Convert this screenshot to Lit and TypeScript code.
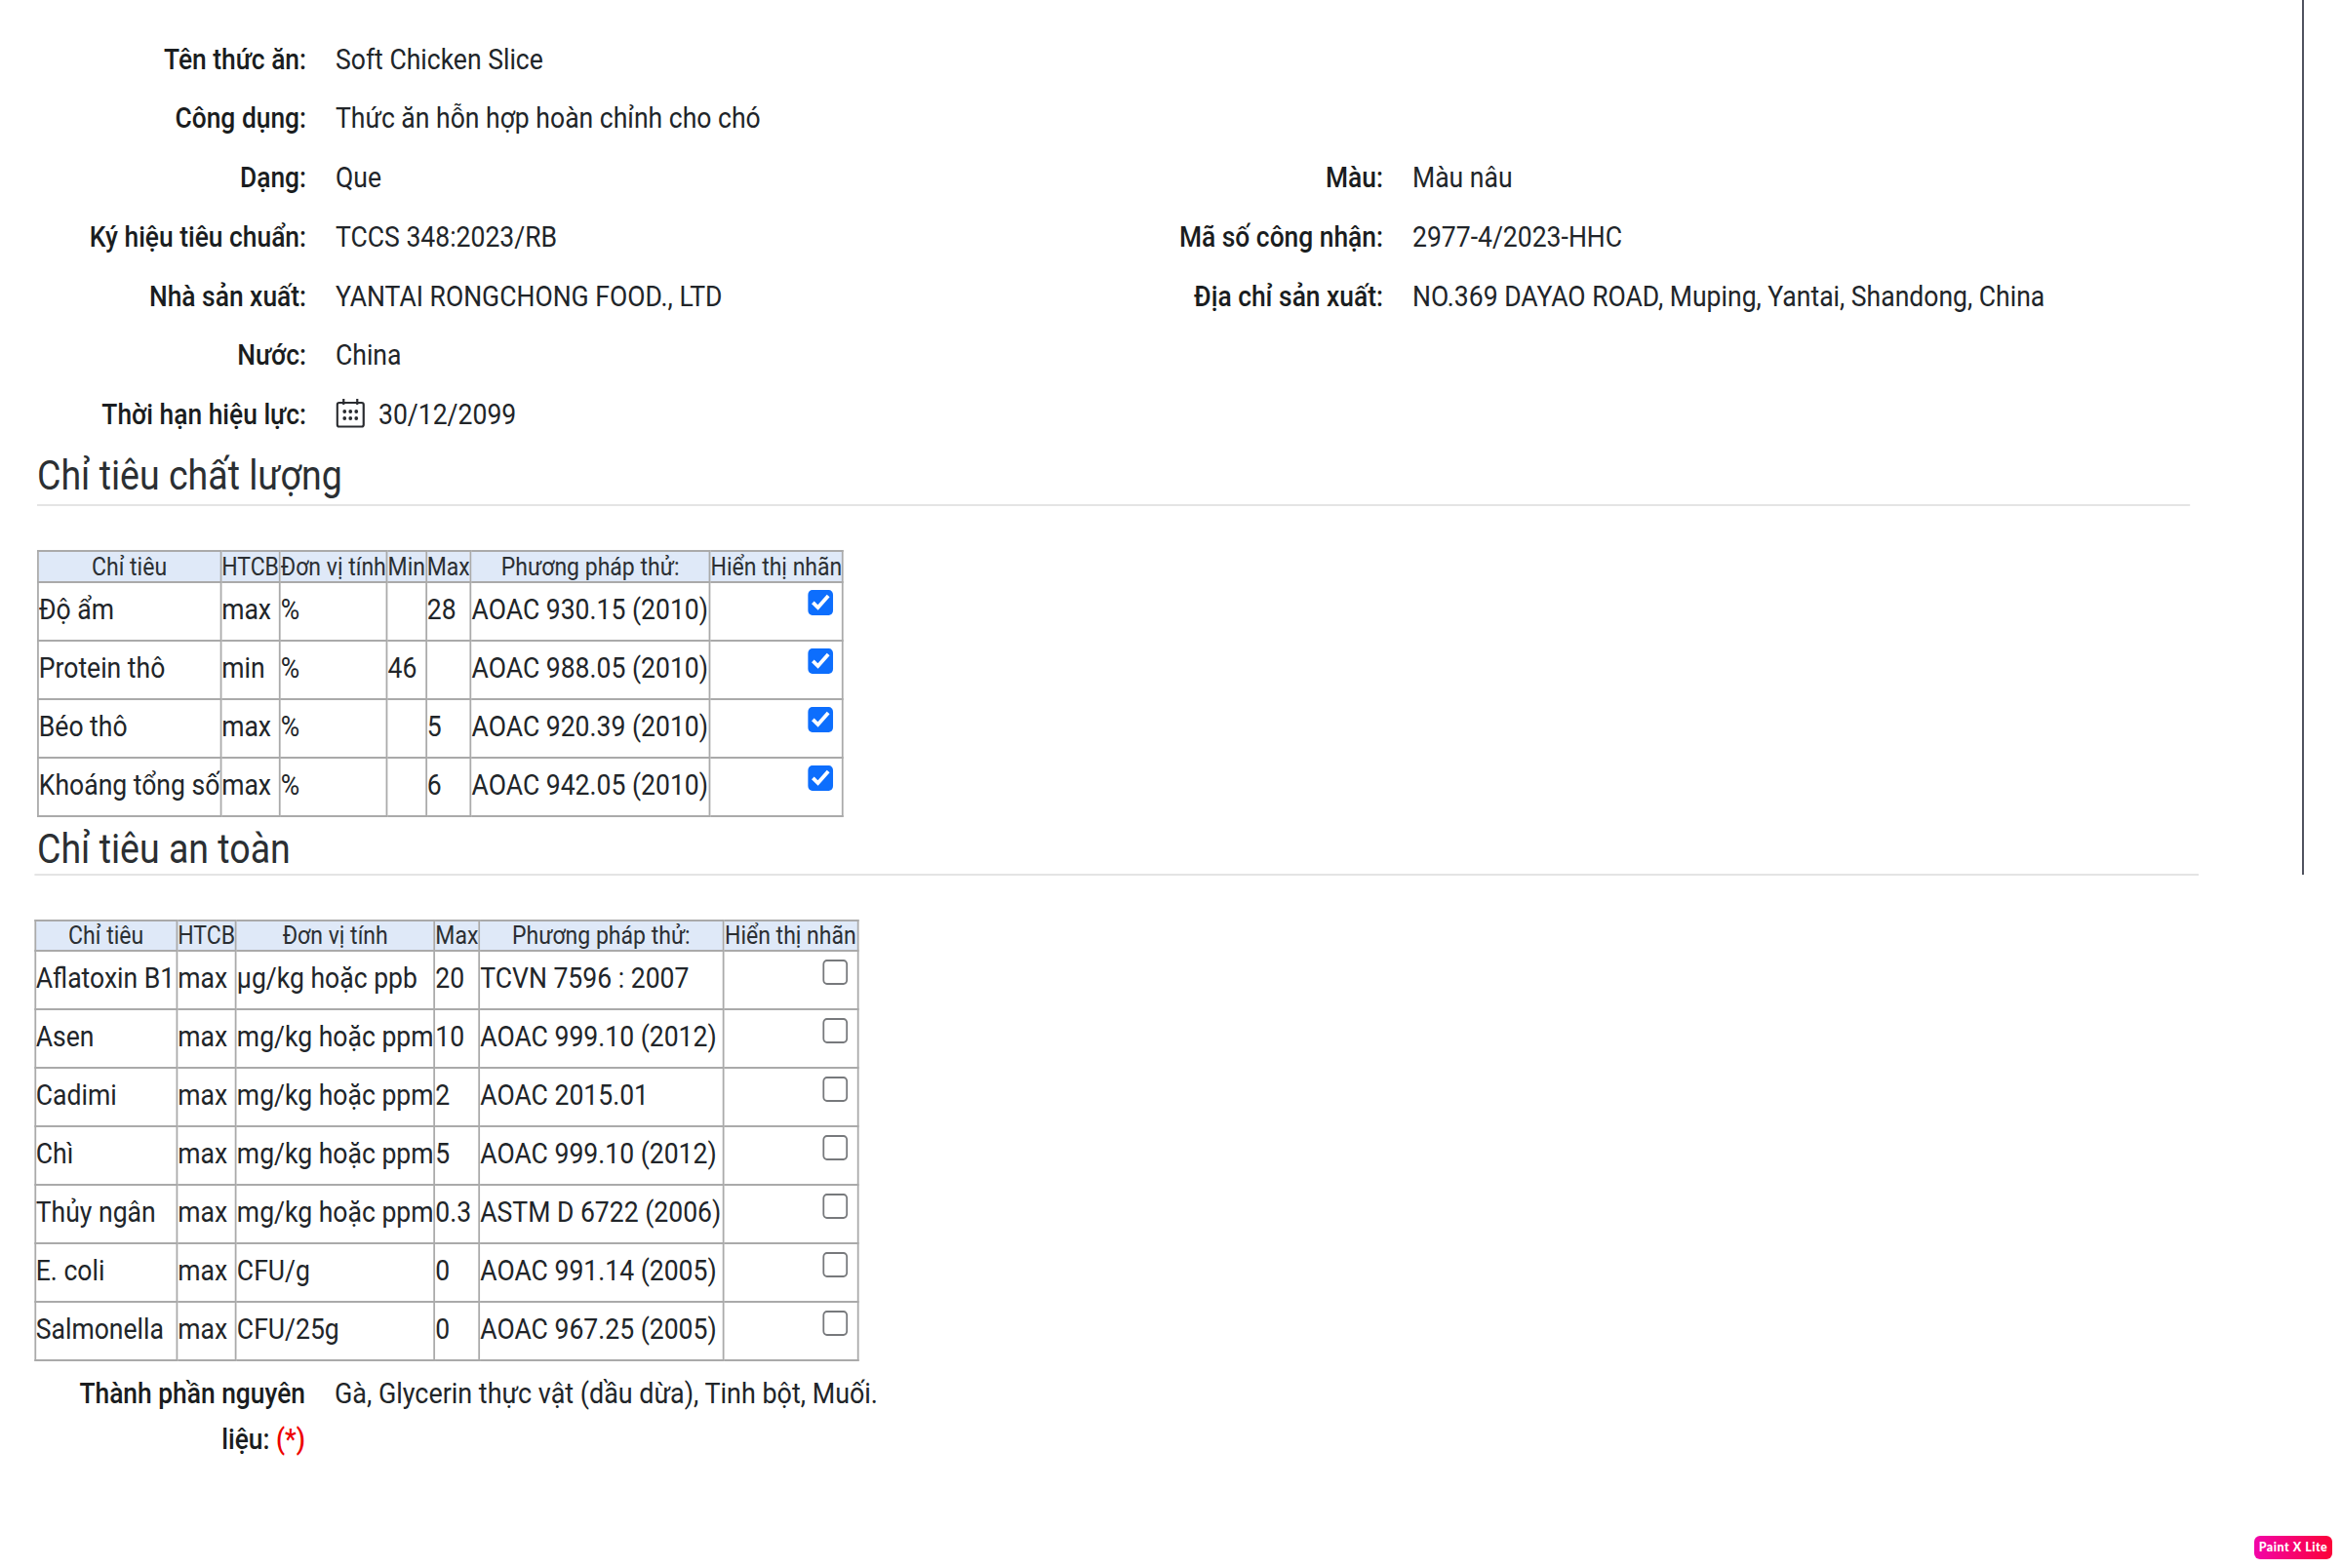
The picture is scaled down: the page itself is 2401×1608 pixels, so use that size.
import { LitElement, html, css, svg } from "lit";
import { customElement } from "lit/decorators.js";

const SX = 0.885;
const w = (v: number) => `width:${v / SX}px`;

type Row = string[];
const q1: Row[] = [
  ["Độ ẩm", "max", "%", "", "28", "AOAC 930.15 (2010)"],
  ["Protein thô", "min", "%", "46", "", "AOAC 988.05 (2010)"],
  ["Béo thô", "max", "%", "", "5", "AOAC 920.39 (2010)"],
  ["Khoáng tổng số", "max", "%", "", "6", "AOAC 942.05 (2010)"],
];
const q2: Row[] = [
  ["Aflatoxin B1", "max", "µg/kg hoặc ppb", "20", "TCVN 7596 : 2007"],
  ["Asen", "max", "mg/kg hoặc ppm", "10", "AOAC 999.10 (2012)"],
  ["Cadimi", "max", "mg/kg hoặc ppm", "2", "AOAC 2015.01"],
  ["Chì", "max", "mg/kg hoặc ppm", "5", "AOAC 999.10 (2012)"],
  ["Thủy ngân", "max", "mg/kg hoặc ppm", "0.3", "ASTM D 6722 (2006)"],
  ["E. coli", "max", "CFU/g", "0", "AOAC 991.14 (2005)"],
  ["Salmonella", "max", "CFU/25g", "0", "AOAC 967.25 (2005)"],
];

@customElement("app-root")
export class AppRoot extends LitElement {
  static styles = css`
    :host {
      display: block;
      position: relative;
      width: 2401px;
      height: 1608px;
      overflow: hidden;
      background: #fff;
      color: #212529;
      font-family: Roboto, "Liberation Sans", sans-serif;
      --sx: 0.885;
    }
    .page {
      width: calc(2401px / var(--sx));
      height: 1608px;
      padding-top: 30.5px;
      box-sizing: border-box;
      transform: scaleX(var(--sx));
      transform-origin: 0 0;
      font-size: 30px;
    }
    .row {
      display: grid;
      grid-template-columns:
        calc(314px / var(--sx)) calc(30px / var(--sx)) calc(774px / var(--sx))
        calc(300px / var(--sx)) calc(30px / var(--sx)) 1fr;
      height: 60.8px;
      line-height: 60.8px;
      white-space: nowrap;
    }
    .label { text-align: right; font-weight: 500; color: #1a1d20; font-size: 29.8px; }
    .value { grid-column: 3; }
    .label2 { grid-column: 4; }
    .value2 { grid-column: 6; }
    .date { display: flex; align-items: center; gap: calc(14px / var(--sx)); }
    .cal { width: calc(30px / var(--sx)); height: 30px; margin-top: -4px; display: block; }
    h2 {
      margin: 0;
      font-weight: 400;
      font-size: 42.4px;
      line-height: 63px;
      color: #2b2f33;
      border-bottom: 2px solid #e4e4e4;
      box-sizing: border-box;
    }
    .h1 { height: 63px; margin-left: calc(38px / var(--sx)); width: calc(2207px / var(--sx)); }
    .h2 {
      height: 60px;
      line-height: 65px;
      margin-left: calc(35px / var(--sx));
      width: calc(2219px / var(--sx));
      padding-left: calc(3px / var(--sx));
    }
    table {
      border-collapse: collapse;
      table-layout: fixed;
      border: 2px solid #aaa;
    }
    .t1 { margin: 45px 0 0 calc(38px / var(--sx)); }
    .t2 { margin: 45px 0 0 calc(35px / var(--sx)); }
    th, td { border: 2px solid #aaa; padding: 0; overflow: hidden; white-space: nowrap; }
    th {
      background: #dfe9f8;
      font-weight: 400;
      font-size: 26px;
      text-align: center;
      color: #2b2f33;
    }
    .t1 th { height: 30px; line-height: 30px; }
    .t2 th { height: 29px; line-height: 29px; }
    td { height: 54px; line-height: 54px; padding-bottom: 4px; }
    td.chk {
      height: 0;
      vertical-align: top;
      text-align: right;
      padding: 7px calc(9px / var(--sx)) 0 0;
      line-height: 0;
    }
    .t2 td.chk { padding-top: 8px; }
    .cb {
      display: inline-block;
      width: calc(26px / var(--sx));
      height: 26px;
      box-sizing: border-box;
      border-radius: 5px;
      vertical-align: top;
    }
    .cb svg { width: 100%; height: 100%; display: block; }
    .on { background: #0d6efd; }
    .off { background: #fff; border: 2px solid #77797c; }
    .ingredients {
      display: grid;
      grid-template-columns: calc(313px / var(--sx)) calc(30px / var(--sx)) 1fr;
      margin-top: 9px;
      line-height: 47px;
    }
    .ingredients .label { width: calc(270px / var(--sx)); justify-self: end; }
    .ingredients .value { grid-column: 3; font-size: 30.4px; }
    .req { color: #e00; }
    .scroll {
      position: absolute;
      left: 2360px;
      top: 0;
      width: 2px;
      height: 897px;
      background: #50535f;
    }
    .badge {
      position: absolute;
      left: 2311px;
      top: 1575px;
      width: 80px;
      height: 24px;
      border-radius: 6px;
      background: linear-gradient(90deg, #f205a8, #fb0238);
      color: #fff;
      font: 900 12.5px/24px Lato, Roboto, sans-serif;
      letter-spacing: 0.5px;
      text-align: center;
      white-space: nowrap;
    }
  `;

  private cb(on: boolean) {
    return html`<span class="cb ${on ? "on" : "off"}" role="checkbox" aria-checked=${on ? "true" : "false"}>
      ${on
        ? html`<svg viewBox="0 0 26 26" preserveAspectRatio="none"><path d="M5 12.8 10.2 18 20.8 6" fill="none" stroke="#fff" stroke-width="3.8"/></svg>`
        : ""}
    </span>`;
  }

  private row(l: string, v: unknown, l2?: string, v2?: string) {
    return html`<div class="row">
      <div class="label">${l}</div>
      <div class="value">${v}</div>
      ${l2 ? html`<div class="label label2">${l2}</div><div class="value2">${v2}</div>` : ""}
    </div>`;
  }

  private table(cls: string, cols: number[], head: string[], rows: Row[], checked: boolean) {
    return html`<table class=${cls}>
      <colgroup>${cols.map((c) => html`<col style=${w(c)} />`)}</colgroup>
      <thead><tr>${head.map((h) => html`<th>${h}</th>`)}</tr></thead>
      <tbody>
        ${rows.map(
          (r) => html`<tr>${r.map((c) => html`<td>${c}</td>`)}<td class="chk">${this.cb(checked)}</td></tr>`
        )}
      </tbody>
    </table>`;
  }

  render() {
    const c = "#2a2c30";
    const cal = svg`<rect x="1.5" y="4" width="27" height="24.5" rx="2" fill="none" stroke=${c} stroke-width="2.2"/>
      <path d="M8 0v6M22 0v6" stroke=${c} stroke-width="2.2"/>
      ${[9, 15, 21].flatMap((x) => [13, 20].map((y) => svg`<circle cx=${x} cy=${y} r="1.9" fill=${c}/>`))}`;
    return html`<div class="page">
        ${this.row("Tên thức ăn:", "Soft Chicken Slice")}
        ${this.row("Công dụng:", "Thức ăn hỗn hợp hoàn chỉnh cho chó")}
        ${this.row("Dạng:", "Que", "Màu:", "Màu nâu")}
        ${this.row("Ký hiệu tiêu chuẩn:", "TCCS 348:2023/RB", "Mã số công nhận:", "2977-4/2023-HHC")}
        ${this.row("Nhà sản xuất:", "YANTAI RONGCHONG FOOD., LTD", "Địa chỉ sản xuất:", "NO.369 DAYAO ROAD, Muping, Yantai, Shandong, China")}
        ${this.row("Nước:", "China")}
        ${this.row(
          "Thời hạn hiệu lực:",
          html`<span class="date"><svg class="cal" viewBox="0 0 30 30" preserveAspectRatio="none">${cal}</svg>30/12/2099</span>`
        )}
        <h2 class="h1">Chỉ tiêu chất lượng</h2>
        ${this.table(
          "t1",
          [183.5, 60, 109.5, 40, 45, 245, 136.5],
          ["Chỉ tiêu", "HTCB", "Đơn vị tính", "Min", "Max", "Phương pháp thử:", "Hiển thị nhãn"],
          q1,
          true
        )}
        <h2 class="h2">Chỉ tiêu an toàn</h2>
        ${this.table(
          "t2",
          [145.5, 58.5, 202, 46, 250, 138],
          ["Chỉ tiêu", "HTCB", "Đơn vị tính", "Max", "Phương pháp thử:", "Hiển thị nhãn"],
          q2,
          false
        )}
        <div class="ingredients">
          <div class="label">Thành phần nguyên liệu: <span class="req">(*)</span></div>
          <div class="value">Gà, Glycerin thực vật (dầu dừa), Tinh bột, Muối.</div>
        </div>
      </div>
      <div class="scroll"></div>
      <div class="badge">Paint X Lite</div>`;
  }
}
